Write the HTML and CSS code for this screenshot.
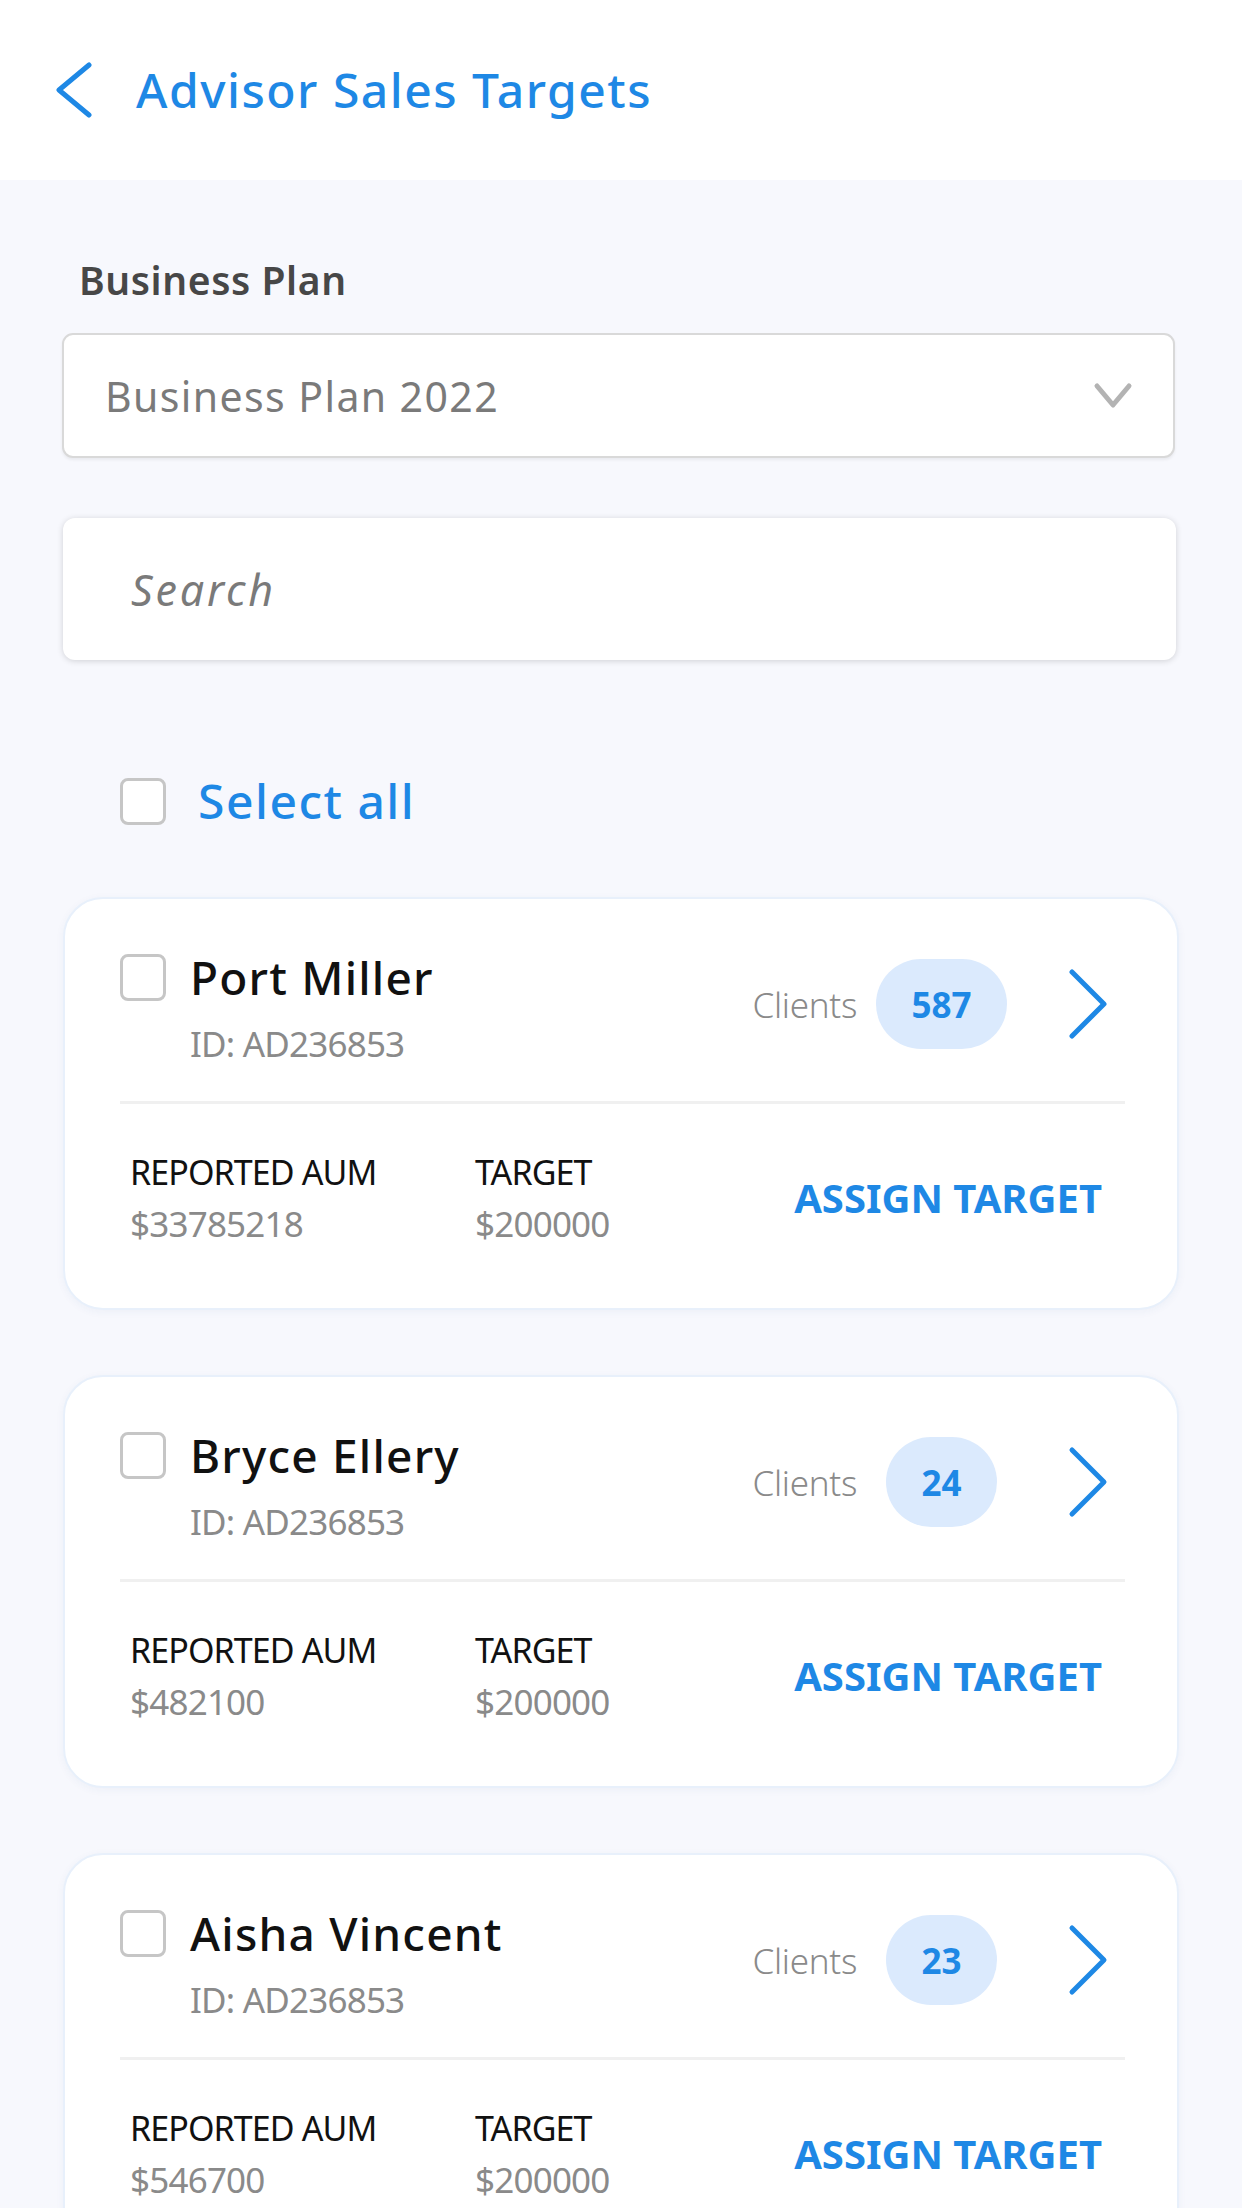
FILE: index.html
```html
<!DOCTYPE html>
<html lang="en">
<head>
<meta charset="utf-8">
<title>Advisor Sales Targets</title>
<link rel="stylesheet" href="styles.css">
</head>
<body>
<header class="topbar">
  <svg class="back" width="40" height="58" viewBox="0 0 40 58"><polyline points="33,4 3,29 33,54" fill="none" stroke="#1e88e5" stroke-width="5" stroke-linecap="round" stroke-linejoin="round"/></svg>
  <h1 class="title">Advisor Sales Targets</h1>
</header>
<main class="content">
  <div class="field-label">Business Plan</div>
  <div class="select">
    <span class="select-text">Business Plan 2022</span>
    <svg class="select-caret" width="40" height="28" viewBox="0 0 40 28"><polyline points="4,4 20,23 36,4" fill="none" stroke="#b3b3b3" stroke-width="5" stroke-linecap="round" stroke-linejoin="round"/></svg>
  </div>
  <div class="search"><span class="search-ph">Search</span></div>
  <div class="select-all">
    <span class="checkbox"></span>
    <span class="select-all-text">Select all</span>
  </div>

  <section class="card">
    <div class="card-top">
      <span class="checkbox card-check"></span>
      <div class="who">
        <div class="name">Port Miller</div>
        <div class="advisor-id">ID: AD236853</div>
      </div>
      <div class="clients">
        <span class="clients-label">Clients</span>
        <span class="badge-slot"><span class="badge">587</span></span>
        <svg class="go" width="40" height="72" viewBox="0 0 40 72"><polyline points="4,4 36,36 4,68" fill="none" stroke="#1e88e5" stroke-width="5" stroke-linecap="round" stroke-linejoin="round"/></svg>
      </div>
    </div>
    <div class="divider"></div>
    <div class="card-bottom">
      <div class="metric"><div class="metric-label">REPORTED AUM</div><div class="metric-value">$33785218</div></div>
      <div class="metric"><div class="metric-label">TARGET</div><div class="metric-value">$200000</div></div>
      <div class="assign">ASSIGN TARGET</div>
    </div>
  </section>

  <section class="card">
    <div class="card-top">
      <span class="checkbox card-check"></span>
      <div class="who">
        <div class="name">Bryce Ellery</div>
        <div class="advisor-id">ID: AD236853</div>
      </div>
      <div class="clients">
        <span class="clients-label">Clients</span>
        <span class="badge-slot"><span class="badge">24</span></span>
        <svg class="go" width="40" height="72" viewBox="0 0 40 72"><polyline points="4,4 36,36 4,68" fill="none" stroke="#1e88e5" stroke-width="5" stroke-linecap="round" stroke-linejoin="round"/></svg>
      </div>
    </div>
    <div class="divider"></div>
    <div class="card-bottom">
      <div class="metric"><div class="metric-label">REPORTED AUM</div><div class="metric-value">$482100</div></div>
      <div class="metric"><div class="metric-label">TARGET</div><div class="metric-value">$200000</div></div>
      <div class="assign">ASSIGN TARGET</div>
    </div>
  </section>

  <section class="card">
    <div class="card-top">
      <span class="checkbox card-check"></span>
      <div class="who">
        <div class="name">Aisha Vincent</div>
        <div class="advisor-id">ID: AD236853</div>
      </div>
      <div class="clients">
        <span class="clients-label">Clients</span>
        <span class="badge-slot"><span class="badge">23</span></span>
        <svg class="go" width="40" height="72" viewBox="0 0 40 72"><polyline points="4,4 36,36 4,68" fill="none" stroke="#1e88e5" stroke-width="5" stroke-linecap="round" stroke-linejoin="round"/></svg>
      </div>
    </div>
    <div class="divider"></div>
    <div class="card-bottom">
      <div class="metric"><div class="metric-label">REPORTED AUM</div><div class="metric-value">$546700</div></div>
      <div class="metric"><div class="metric-label">TARGET</div><div class="metric-value">$200000</div></div>
      <div class="assign">ASSIGN TARGET</div>
    </div>
  </section>
</main>
</body>
</html>
```
FILE: styles.css
```css
* { box-sizing: border-box; }
html, body { margin: 0; padding: 0; }
body {
  background: #f7f8fd;
  font-family: "Noto Sans", "Open Sans", sans-serif;
  color: #111;
  width: 1242px;
  overflow: hidden;
}
.topbar {
  height: 180px;
  background: #fff;
  display: flex;
  align-items: center;
  padding-left: 56px;
}
.back { display: block; flex: none; }
.title {
  margin: 0 0 0 40px;
  font-size: 48px;
  font-weight: 500;
  color: #1e88e5;
  line-height: 58px;
  letter-spacing: 1.5px;
}
.content {
  padding: 76px 63px 0 62px;
}
.field-label {
  font-size: 39px;
  font-weight: 600;
  color: #474747;
  line-height: 48px;
  padding-left: 17px;
  letter-spacing: 0.6px;
}
.select {
  margin: 29px 4px 0 0;
  height: 125px;
  background: #fff;
  border: 2px solid #d9d9d9;
  border-radius: 11px;
  box-shadow: 0 2px 3px rgba(0,0,0,0.06);
  display: flex;
  align-items: center;
  justify-content: space-between;
  padding: 0 40px 0 41px;
}
.select-text {
  font-size: 41px;
  color: #7a7a7a;
  letter-spacing: 1.4px;
}
.select-caret { display: block; }
.search {
  margin: 60px 3px 0 1px;
  height: 142px;
  background: #fff;
  border-radius: 12px;
  box-shadow: 0 1px 6px rgba(0,0,0,0.16);
  display: flex;
  align-items: center;
  padding-left: 68px;
}
.search-ph {
  font-size: 43px;
  font-style: italic;
  color: #7a7a7a;
  letter-spacing: 2.8px;
}
.select-all {
  margin-top: 112px;
  height: 58px;
  display: flex;
  align-items: center;
  padding-left: 58px;
}
.checkbox {
  display: block;
  flex: none;
  width: 46px;
  height: 47px;
  border: 3px solid #c6c6c6;
  border-radius: 8px;
  background: #fff;
}
.select-all-text {
  margin-left: 32px;
  font-size: 48px;
  font-weight: 500;
  color: #1e88e5;
  line-height: 58px;
  letter-spacing: 1.5px;
}
.card {
  margin: 65px 0 0 1px;
  background: #fff;
  border: 2px solid #e8f0fb;
  border-radius: 40px;
  box-shadow: 0 2px 8px rgba(30,70,140,0.05);
}
.select-all + .card { margin-top: 67px; }
.card-top {
  display: flex;
  align-items: flex-start;
  padding: 50px 69px 0 55px;
}
.card-check { margin-top: 5px; }
.who {
  margin-left: 24px;
  flex: 1;
}
.name {
  font-size: 46px;
  font-weight: 500;
  line-height: 56px;
  color: #111;
  letter-spacing: 1.2px;
}
.advisor-id {
  margin-top: 17px;
  font-size: 35px;
  line-height: 44px;
  color: #8a8a8a;
  letter-spacing: -0.8px;
}
.clients {
  margin-top: 10px;
  display: flex;
  align-items: center;
  height: 90px;
}
.clients-label {
  font-size: 35px;
  color: #8a8a8a;
  font-weight: 300;
  letter-spacing: -0.3px;
}
.badge-slot {
  margin-left: 18px;
  width: 133px;
  display: flex;
  justify-content: center;
}
.badge {
  height: 90px;
  padding: 0 35px;
  border-radius: 45px;
  background: #dbeafd;
  color: #1e88e5;
  font-size: 35px;
  font-weight: 700;
  display: flex;
  align-items: center;
}
.go { display: block; margin-left: 60px; }
.divider {
  margin: 35px 52px 0 55px;
  height: 3px;
  background: #f0f0f0;
}
.card-bottom {
  display: grid;
  grid-template-columns: 345px 1fr auto;
  align-items: center;
  padding: 44px 75px 60px 65px;
}
.metric-label {
  font-size: 34px;
  line-height: 48px;
  color: #111;
  letter-spacing: -0.9px;
}
.metric-value {
  margin-top: 4px;
  font-size: 35px;
  line-height: 48px;
  color: #8a8a8a;
  letter-spacing: -0.8px;
}
.assign {
  font-size: 40px;
  font-weight: 700;
  color: #1e88e5;
  line-height: 50px;
}
```
